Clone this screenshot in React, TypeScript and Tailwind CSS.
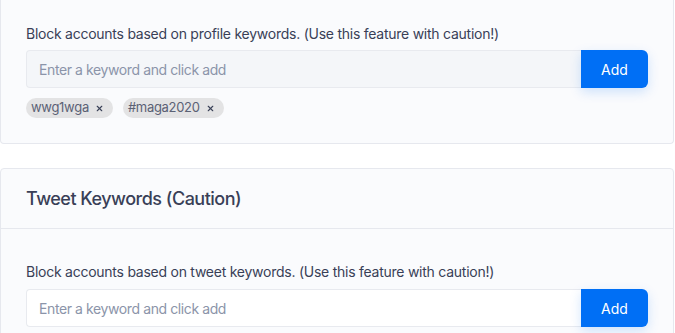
import { X } from "lucide-react";

function KeywordInput({ filled }: { filled?: boolean }) {
  return (
    <div className="flex h-[38px]">
      <input
        placeholder="Enter a keyword and click add"
        className={`flex-1 min-w-0 h-full px-3 text-[14px] tracking-[-0.4px] rounded-l-[4px] border border-r-0 border-[#e8eaef] outline-none placeholder:text-[#8b94a9] text-[#3b4258] ${
          filled ? "bg-[#f4f6f9]" : "bg-white"
        }`}
      />
      <button className="w-[67px] h-full bg-[#006ff5] text-white text-[14px] rounded-r-[6px] shadow-[0_4px_12px_rgba(0,111,245,0.18)]">
        Add
      </button>
    </div>
  );
}

function Tag({ label }: { label: string }) {
  return (
    <span className="inline-flex items-center gap-[6px] h-[20px] pl-[5px] pr-[9px] rounded-full bg-[#e3e3e4] text-[13px] tracking-[-0.3px] text-[#5b6175]">
      {label}
      <X size={9} strokeWidth={3} className="text-[#3b4258]" />
    </span>
  );
}

export default function App() {
  return (
    <div
      className="w-[675px] h-[333px] overflow-hidden bg-white text-[#393f57]"
      style={{ fontFamily: "Inter, 'Noto Sans', sans-serif" }}
    >
      <div className="w-[674px] bg-[#fafbfd] border border-t-0 border-[#e6e8ee] rounded-b-[4px] px-[25px] pt-[24px] pb-[25px]">
        <p className="text-[14px] tracking-[-0.25px] leading-[20px] mb-[6px]">
          Block accounts based on profile keywords. (Use this feature with caution!)
        </p>
        <KeywordInput filled />
        <div className="flex gap-[10px] mt-[10px]">
          <Tag label="wwg1wga" />
          <Tag label="#maga2020" />
        </div>
      </div>

      <div className="w-[674px] mt-[24px] bg-[#fafbfd] border border-[#e6e8ee] rounded-[4px]">
        <div className="h-[60px] flex items-center px-[25px] border-b border-[#e6e8ee]">
          <h2 className="text-[18px] tracking-[-0.5px] font-medium">Tweet Keywords (Caution)</h2>
        </div>
        <div className="px-[25px] pt-[33px] pb-[25px]">
          <p className="text-[14px] tracking-[-0.25px] leading-[20px] mb-[7px]">
            Block accounts based on tweet keywords. (Use this feature with caution!)
          </p>
          <KeywordInput />
        </div>
      </div>
    </div>
  );
}
